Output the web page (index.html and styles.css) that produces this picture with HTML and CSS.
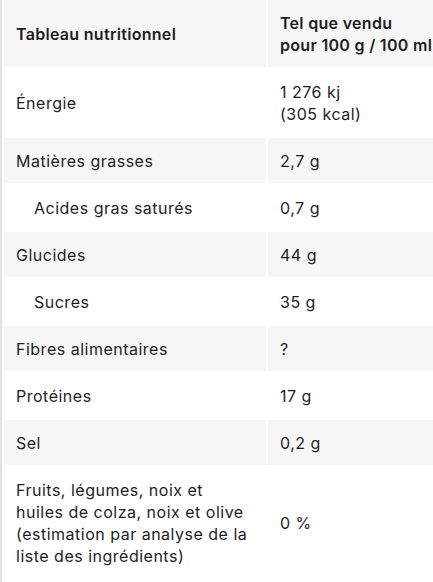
FILE: index.html
```html
<!DOCTYPE html>
<html lang="fr">
<head>
<meta charset="utf-8">
<title>Tableau nutritionnel</title>
<link rel="stylesheet" href="styles.css">
</head>
<body>
<div class="frame">
  <div class="table">
    <div class="cell head shade">Tableau nutritionnel</div>
    <div class="cell head shade">Tel que vendu<br>pour 100 g / 100 ml</div>

    <div class="cell">Énergie</div>
    <div class="cell">1 276 kj<br>(305 kcal)</div>

    <div class="cell shade">Matières grasses</div>
    <div class="cell shade">2,7 g</div>

    <div class="cell sub">Acides gras saturés</div>
    <div class="cell">0,7 g</div>

    <div class="cell shade">Glucides</div>
    <div class="cell shade">44 g</div>

    <div class="cell sub">Sucres</div>
    <div class="cell">35 g</div>

    <div class="cell shade">Fibres alimentaires</div>
    <div class="cell shade">?</div>

    <div class="cell">Protéines</div>
    <div class="cell">17 g</div>

    <div class="cell shade">Sel</div>
    <div class="cell shade">0,2 g</div>

    <div class="cell">Fruits, légumes, noix et huiles de colza, noix et olive (estimation par analyse de la liste des ingrédients)</div>
    <div class="cell">0 %</div>
  </div>
</div>
</body>
</html>
```
FILE: styles.css
```css
html, body {
  margin: 0;
  padding: 0;
  background: #ffffff;
  overflow: hidden;
}
body {
  font-family: Inter, "Noto Sans", "Liberation Sans", sans-serif;
  font-size: 16px;
  line-height: 22px;
  letter-spacing: 0.5px;
  color: #1d1d1f;
}
.frame {
  width: 470px;
  height: 582px;
  border-left: 2px solid #e2e2e2;
  padding-left: 2px;
}
.table {
  display: grid;
  grid-template-columns: 262px 1fr;
  gap: 2px;
}
.cell {
  display: flex;
  flex-direction: column;
  justify-content: center;
  padding: 11.5px 12px;
  background: #ffffff;
}
.cell.shade {
  background: #f6f6f6;
}
.cell.head {
  font-weight: 600;
  letter-spacing: 0.3px;
}
.cell.sub {
  padding-left: 30px;
}
```
